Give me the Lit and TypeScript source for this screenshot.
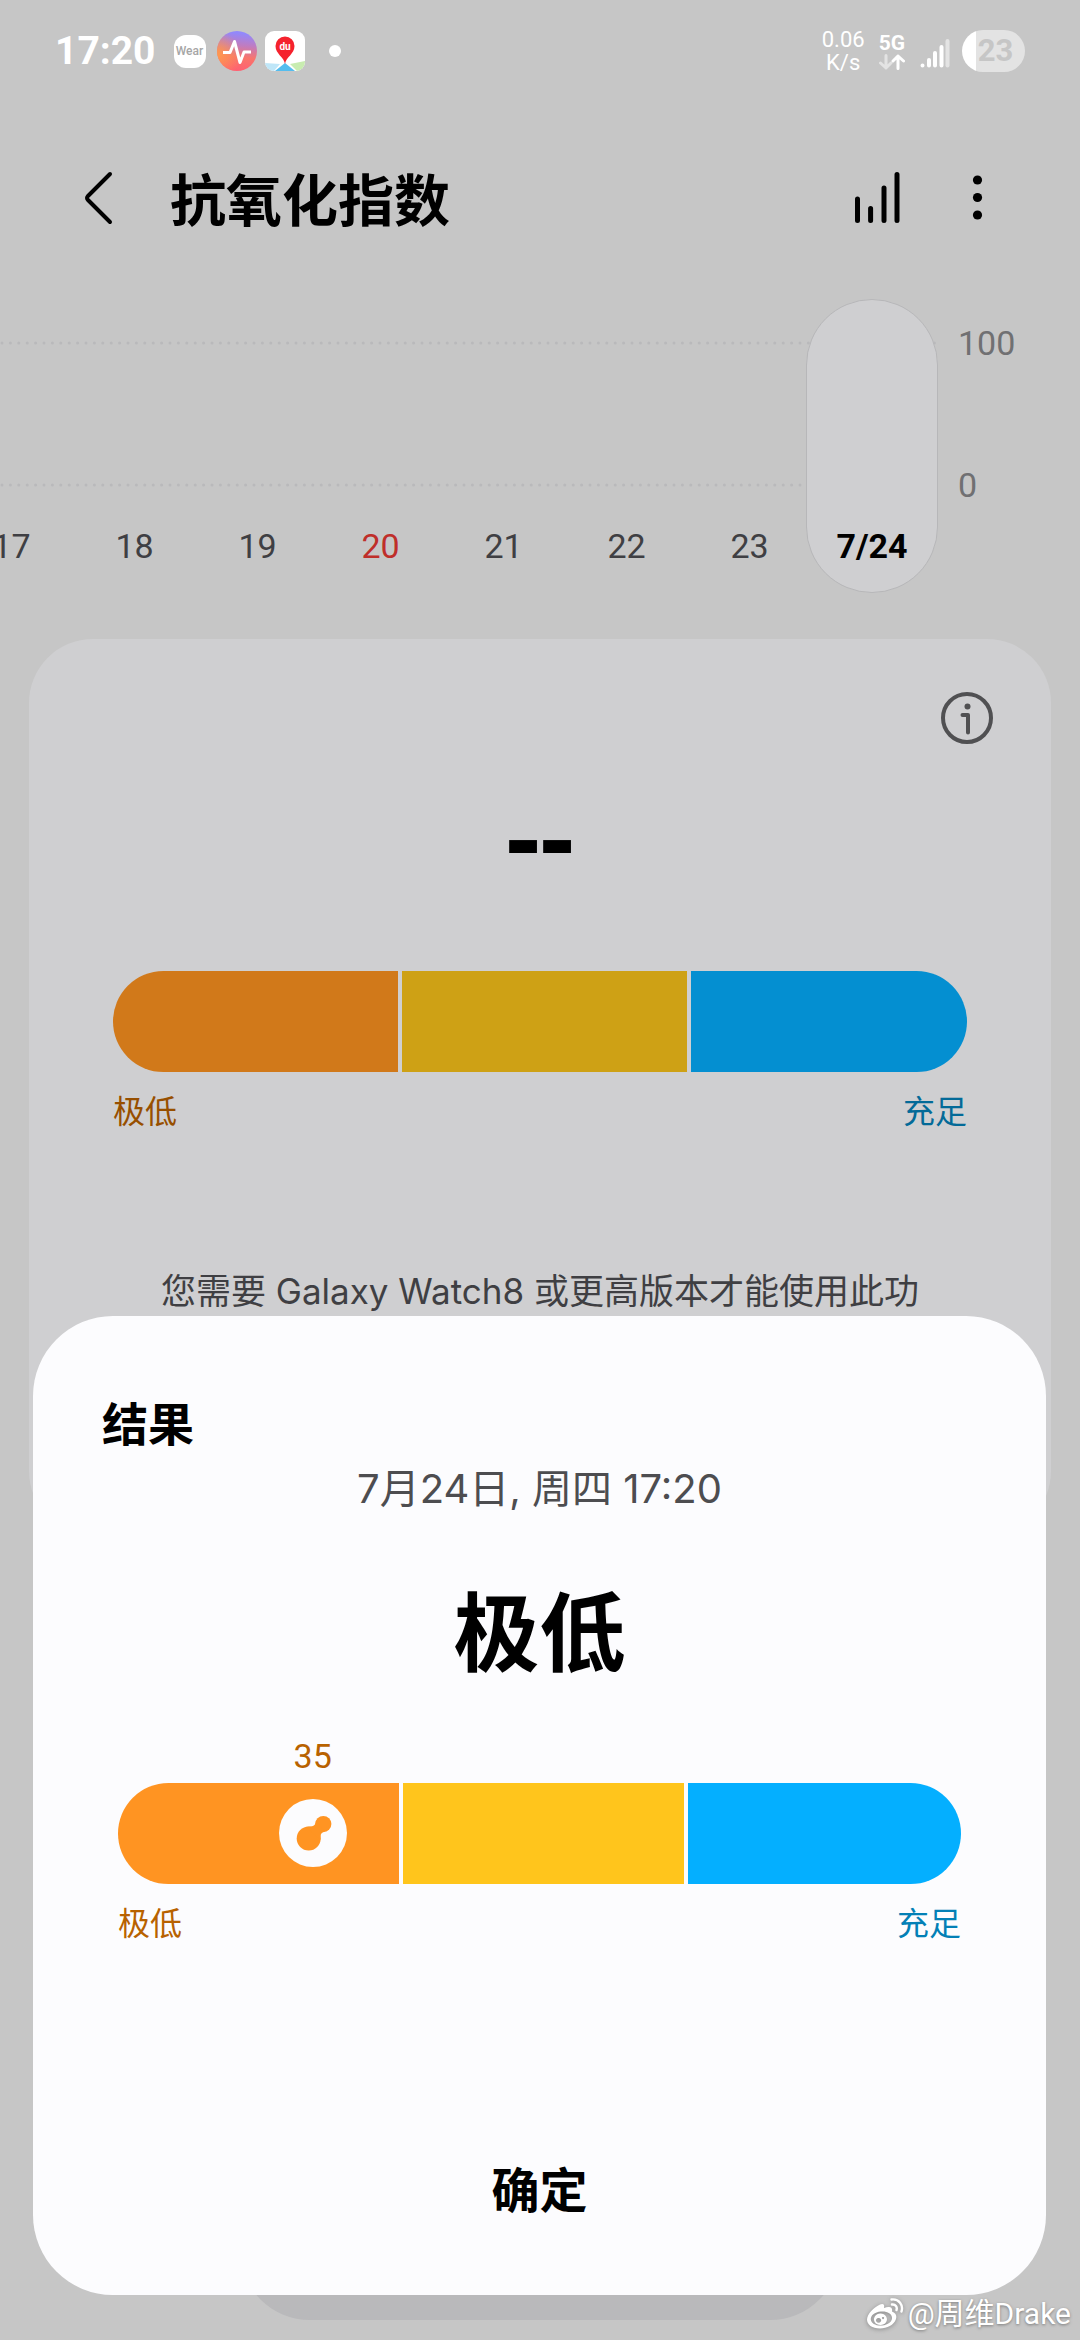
import { LitElement, html, css, svg, nothing } from "lit";
import { customElement, property } from "lit/decorators.js";
import { classMap } from "lit/directives/class-map.js";
import { styleMap } from "lit/directives/style-map.js";

/** Three-zone capsule scale with an optional marker for the measured score. */
@customElement("level-scale")
export class LevelScale extends LitElement {
  @property({ type: Boolean, reflect: true }) dimmed = false;
  @property({ type: Number }) score?: number;
  /** Marker position along the capsule, in percent. */
  @property({ type: Number }) place = 0;

  static styles = css`
    :host {
      display: block;
      --low: #ff9422;
      --mid: #ffc51c;
      --high: #04afff;
      --low-text: #b86200;
      --high-text: #0380b6;
    }
    :host([dimmed]) {
      --low: #d1791a;
      --mid: #cea115;
      --high: #048fd1;
      --low-text: #974f00;
      --high-text: #036a98;
    }
    .scale {
      position: relative;
    }
    .bar {
      display: flex;
      gap: 4px;
      height: 101px;
      border-radius: 51px;
      overflow: hidden;
    }
    .zone {
      flex: 103 1 0;
    }
    .zone.low {
      background: var(--low);
    }
    .zone.mid {
      background: var(--mid);
    }
    .zone.high {
      flex-grow: 100;
      background: var(--high);
    }
    .score,
    .marker {
      position: absolute;
      transform: translateX(-50%);
    }
    .score {
      bottom: 108px;
      font-size: 34px;
      line-height: 40px;
      color: var(--low-text);
    }
    .marker {
      top: 16px;
      display: block;
      width: 68px;
      height: 68px;
    }
    .ends {
      display: flex;
      justify-content: space-between;
      margin-top: 16px;
      font-size: 32px;
      line-height: 48px;
    }
    .ends .from {
      color: var(--low-text);
    }
    .ends .to {
      color: var(--high-text);
    }
  `;

  render() {
    const at = styleMap({ left: `${this.place}%` });
    return html`
      <div class="scale">
        <div class="bar">
          <span class="zone low"></span>
          <span class="zone mid"></span>
          <span class="zone high"></span>
        </div>
        ${this.score === undefined
          ? nothing
          : html`
              <span class="score" style=${at}>${this.score}</span>
              <svg class="marker" style=${at} viewBox="0 0 68 68" aria-hidden="true">
                <circle cx="34" cy="34" r="34" fill="#fcfcfe" />
                <g fill="#ff9422">
                  <circle cx="29.7" cy="39.6" r="12" />
                  <circle cx="44.3" cy="25" r="8.1" />
                  <path d="M27 28C34 27.5 36.5 27 37 22L46 33C42.500 33 41 35 41.500 41Z" />
                </g>
              </svg>
            `}
      </div>
      <div class="ends"><span class="from">极低</span><span class="to">充足</span></div>
    `;
  }
}

interface Day {
  label: string;
  holiday?: boolean;
  today?: boolean;
}

@customElement("app-root")
export class AppRoot extends LitElement {
  static styles = css`
    :host {
      display: block;
      font-family: Roboto, "Noto Sans CJK SC", sans-serif;
      color: #000;
    }
    svg {
      display: block;
    }
    button {
      margin: 0;
      padding: 0;
      border: 0;
      background: none;
      color: inherit;
      font: inherit;
    }
    .page {
      position: relative;
      min-height: 100vh;
      overflow: hidden;
      background: #c6c6c6;
    }

    .status {
      display: flex;
      align-items: center;
      justify-content: space-between;
      height: 102px;
      padding: 0 55px;
      color: #fff;
    }
    .status-left,
    .status-right {
      display: flex;
      align-items: center;
    }
    .time {
      margin-right: 18px;
      font-size: 39px;
      font-weight: 700;
      line-height: 48px;
    }
    .wear {
      display: grid;
      place-items: center;
      width: 32px;
      height: 33px;
      margin-right: 11px;
      border-radius: 12px;
      background: #fff;
      color: #a6a6a6;
      font-size: 12px;
      font-weight: 500;
    }
    .apps {
      display: flex;
      gap: 8px;
    }
    .dot {
      width: 12px;
      height: 12px;
      margin-left: 24px;
      border-radius: 50%;
      background: #fff;
    }
    .speed {
      margin-right: 14px;
      font-size: 22px;
      line-height: 23px;
      text-align: center;
    }
    .network {
      display: grid;
      justify-items: center;
      margin-right: 15px;
      font-size: 21px;
      font-weight: 700;
      line-height: 21px;
    }
    .signal {
      margin-right: 12px;
    }
    .battery {
      display: grid;
      place-items: center;
      box-sizing: border-box;
      width: 63px;
      height: 42px;
      padding-left: 4px;
      border-radius: 21px;
      background: linear-gradient(90deg, #fff 14px, #e3e3e3 14px);
      color: #c6c6c6;
      font-size: 31px;
      font-weight: 700;
      line-height: 42px;
    }

    .header {
      display: flex;
      align-items: center;
      height: 192px;
      padding: 0 70px 0 66px;
    }
    .title {
      flex: 1;
      margin: 0 0 0 40px;
      padding-top: 8px;
      font-size: 56px;
      font-weight: 700;
      line-height: 72px;
    }
    .actions {
      display: flex;
      gap: 37px;
    }

    .chart {
      display: grid;
      grid-template-columns: minmax(0, 1fr) 142px;
      height: 294px;
      margin-top: 5px;
      font-size: 34px;
      line-height: 40px;
    }
    .plot {
      display: grid;
      grid-template-columns: minmax(0, 1fr);
      overflow: hidden;
    }
    .guides,
    .days {
      grid-area: 1 / 1;
    }
    .guides {
      display: flex;
      flex-direction: column;
      gap: 138px;
      padding-top: 42px;
    }
    .days {
      display: flex;
      justify-content: flex-end;
      margin: 0;
      padding: 0;
      list-style: none;
    }
    .day {
      display: flex;
      flex: none;
      align-items: flex-end;
      justify-content: center;
      box-sizing: border-box;
      width: 123px;
      padding-bottom: 27px;
      color: #3f3f43;
    }
    .day.holiday {
      color: #bf2e2a;
    }
    .day.today {
      width: 132px;
      margin-left: -5px;
      padding-bottom: 26px;
      border: 1px solid #b7b7b9;
      border-radius: 66px;
      background: #cfcfd1;
      color: #000;
      font-weight: 700;
    }
    .axis {
      display: flex;
      flex-direction: column;
      gap: 102px;
      padding: 24px 0 0 20px;
      color: #707072;
    }

    .card {
      display: flex;
      flex-direction: column;
      margin: 46px 29px 0;
      padding: 47px 84px 220px;
      border-radius: 64px;
      background: #cfcfd1;
    }
    .info {
      align-self: flex-end;
      margin-right: -32px;
    }
    .empty {
      margin: 24px 0 77px;
      font-family: "Open Sans", sans-serif;
      font-size: 106px;
      font-weight: 700;
      line-height: 120px;
      text-align: center;
    }
    .notice {
      margin: 131px 0 0;
      color: #3f3f43;
      font-family: Inter, "Noto Sans CJK SC", sans-serif;
      font-size: 35px;
      line-height: 48px;
      text-align: center;
      white-space: nowrap;
    }

    .dock {
      position: absolute;
      right: 240px;
      bottom: 20px;
      left: 240px;
      height: 140px;
      border-radius: 70px;
      background: #b9b9bb;
    }
    .sheet {
      position: absolute;
      right: 34px;
      bottom: 45px;
      left: 33px;
      display: flex;
      flex-direction: column;
      box-sizing: border-box;
      padding: 79px 85px 58px;
      border-radius: 80px;
      background: #fcfcfe;
    }
    .sheet-title {
      margin: 0 -16px;
      font-size: 46px;
      font-weight: 700;
      line-height: 60px;
    }
    .date {
      margin: 8px 0 0;
      color: #4d4d50;
      font-family: Inter, "Noto Sans CJK SC", sans-serif;
      font-size: 40px;
      line-height: 52px;
      text-align: center;
    }
    .level {
      margin: 61px 0 87px;
      font-size: 86px;
      font-weight: 700;
      line-height: 120px;
      text-align: center;
    }
    .confirm {
      align-self: center;
      margin-top: 199px;
      padding: 0 60px;
      font-size: 48px;
      font-weight: 700;
      line-height: 90px;
    }

    .credit {
      position: absolute;
      right: 9px;
      bottom: 8px;
      display: flex;
      align-items: center;
      gap: 4px;
      color: #fff;
      font-size: 30px;
      line-height: 36px;
      text-shadow: 0 1px 3px #777;
    }
    .credit svg {
      filter: drop-shadow(0 1px 2px #888);
    }
  `;

  private days: Day[] = [
    { label: "17" },
    { label: "18" },
    { label: "19" },
    { label: "20", holiday: true },
    { label: "21" },
    { label: "22" },
    { label: "23" },
    { label: "7/24", today: true },
  ];

  private guide() {
    return html`<svg width="100%" height="4" aria-hidden="true">
      ${svg`<line x1="2" y1="2" x2="100%" y2="2" stroke="#b9b9bb" stroke-width="3"
        stroke-linecap="round" stroke-dasharray="0 8.4" />`}
    </svg>`;
  }

  private statusBar() {
    return html`
      <div class="status">
        <div class="status-left">
          <span class="time">17:20</span>
          <span class="wear">Wear</span>
          <div class="apps">
            <svg width="40" height="40" viewBox="0 0 40 40" aria-hidden="true">
              <defs>
                <linearGradient id="pulse" x1="0.55" y1="0" x2="0.45" y2="1">
                  <stop offset="0.05" stop-color="#9288fb" />
                  <stop offset="0.35" stop-color="#c07cc0" />
                  <stop offset="0.65" stop-color="#f9756b" />
                  <stop offset="1" stop-color="#ff5f72" />
                </linearGradient>
                <radialGradient id="warm" cx="0" cy="0.6" r="0.6">
                  <stop offset="0" stop-color="#ff9a4c" />
                  <stop offset="1" stop-color="#ff9a4c" stop-opacity="0" />
                </radialGradient>
              </defs>
              <circle cx="20" cy="20" r="20" fill="url(#pulse)" />
              <circle cx="20" cy="20" r="20" fill="url(#warm)" />
              <path d="M6 21.500H13L17.500 10.500L23 31.500L27 21H34" fill="none" stroke="#fff"
                stroke-width="3" stroke-linejoin="round" />
            </svg>
            <svg width="40" height="40" viewBox="0 0 40 40" aria-hidden="true">
              <defs><clipPath id="tile"><rect width="40" height="40" rx="9" /></clipPath></defs>
              <g clip-path="url(#tile)">
                <rect width="40" height="40" fill="#fff" />
                <path d="M0 32L15 33L9 40H0Z" fill="#bfe6f8" />
                <path d="M25 33L40 30V40H32Z" fill="#c8ecb0" />
                <path d="M20 32L30 40H10Z" fill="#55bdee" />
              </g>
              <path d="M20 33C19 26 10.500 23 10.500 15A9.500 9.500 0 0 1 29.500 15C29.500 23 21 26 20 33Z" fill="#f5222d" />
              <text x="20" y="19" fill="#fff" font-size="10" font-weight="700" text-anchor="middle">du</text>
            </svg>
          </div>
          <span class="dot"></span>
        </div>
        <div class="status-right">
          <span class="speed">0.06<br />K/s</span>
          <span class="network">
            5G
            <svg width="26" height="16" viewBox="0 0 26 16" fill="none" stroke-width="3"
              stroke-linecap="round" stroke-linejoin="round" aria-hidden="true">
              <path d="M7 1.500V14M1.500 9L7 14L12 9" stroke="#e3e3e3" />
              <path d="M19 14.500V2M14 7L19 2L24.500 7" stroke="#fff" />
            </svg>
          </span>
          <svg class="signal" width="30" height="42" viewBox="0 0 30 42" fill="none"
            stroke-width="4" stroke-linecap="round" stroke="#fff" aria-hidden="true">
            <path d="M2.500 35.500V35.600M9 30V35.600M15 23V35.600M21.500 17V35.600" />
            <path d="M27.500 11V35.600" stroke="#e3e3e3" />
          </svg>
          <span class="battery">23</span>
        </div>
      </div>
    `;
  }

  render() {
    return html`
      <div class="page">
        ${this.statusBar()}
        <header class="header">
          <button type="button" aria-label="返回">
            <svg width="64" height="64" viewBox="0 0 64 64" fill="none" stroke="#000"
              stroke-width="4" stroke-linecap="round" stroke-linejoin="round">
              <path d="M44 8L22 30Q20 32 22 34L44 56" />
            </svg>
          </button>
          <h1 class="title">抗氧化指数</h1>
          <div class="actions">
            <button type="button" aria-label="图表">
              <svg width="64" height="64" viewBox="0 0 64 64" fill="none" stroke="#000"
                stroke-width="5" stroke-linecap="round">
                <path d="M12.500 33V54.500M25.600 42.500V54.500M39 22V54.500M52 8.500V54.500" />
              </svg>
            </button>
            <button type="button" aria-label="更多">
              <svg width="64" height="64" viewBox="0 0 64 64">
                <circle cx="31.500" cy="14" r="4.600" />
                <circle cx="31.500" cy="31.500" r="4.600" />
                <circle cx="31.500" cy="49" r="4.600" />
              </svg>
            </button>
          </div>
        </header>

        <section class="chart">
          <div class="plot">
            <div class="guides">${this.guide()}${this.guide()}</div>
            <ol class="days">
              ${this.days.map(
                (d) => html`<li class=${classMap({ day: true, holiday: !!d.holiday, today: !!d.today })}>${d.label}</li>`,
              )}
            </ol>
          </div>
          <div class="axis"><span>100</span><span>0</span></div>
        </section>

        <main class="card">
          <button class="info" type="button" aria-label="说明">
            <svg width="64" height="64" viewBox="0 0 64 64" fill="none" stroke="#505052"
              stroke-width="4" stroke-linecap="round" stroke-linejoin="round">
              <circle cx="32" cy="32" r="24" />
              <path d="M27.500 29H33V46.500" />
              <circle cx="32.500" cy="20.500" r="3" fill="#505052" stroke="none" />
            </svg>
          </button>
          <p class="empty">--</p>
          <level-scale dimmed></level-scale>
          <p class="notice">您需要 Galaxy Watch8 或更高版本才能使用此功</p>
        </main>

        <div class="dock"></div>

        <section class="sheet" role="dialog" aria-labelledby="result">
          <h2 class="sheet-title" id="result">结果</h2>
          <p class="date">7月24日, 周四 17:20</p>
          <p class="level">极低</p>
          <level-scale .score=${35} .place=${23.1}></level-scale>
          <button class="confirm" type="button">确定</button>
        </section>

        <div class="credit">
          <svg width="38" height="34" viewBox="0 0 38 34" aria-hidden="true">
            <path fill="#fff" fill-rule="evenodd"
              d="M14 7.500C17 6 19 7.500 18 11C23 9 27 10 26 14.500C30 16 31 19 30 22C28 28 21 31.500 14 31.500C6 31.500 1 27.500 1 22.500C1 17 8 10 14 7.500ZM15 14.500C8.500 15 4.500 18.500 4.800 22.500C5.200 26.500 10 29 16 28.500C22 28 26.500 24.500 26 20.500C25.700 16.500 21 14 15 14.500Z" />
            <path fill="#fff" fill-rule="evenodd"
              d="M14.500 16.500A6.500 5.800 0 1 1 14.400 16.500ZM12.500 21A2.600 2.400 0 1 0 12.600 21ZM17 20A1 1 0 1 0 17.100 20Z" />
            <path fill="none" stroke="#fff" stroke-width="2.400" stroke-linecap="round"
              d="M26 7.500C29.500 7 31.500 10 30.500 13M25.500 2.500C33 1.500 37.500 8 35.500 14.500" />
          </svg>
          <span>@周维Drake</span>
        </div>
      </div>
    `;
  }
}
